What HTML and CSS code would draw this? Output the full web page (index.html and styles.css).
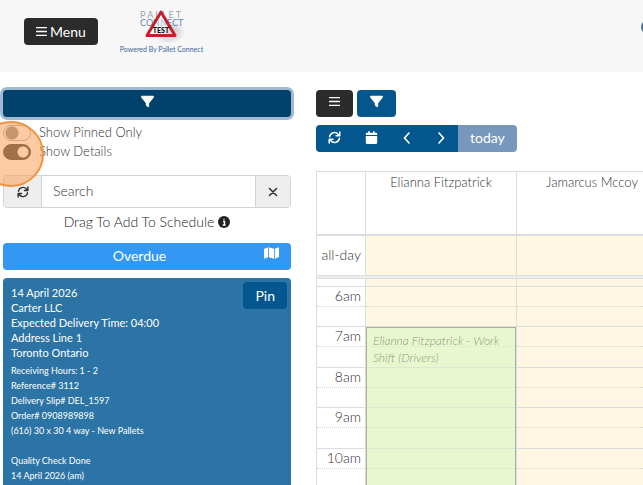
FILE: index.html
```html
<!DOCTYPE html>
<html lang="en">
<head>
    <meta charset="UTF-8">
    <meta name="viewport" content="width=device-width, initial-scale=1.0">
    <title>Pallet Connect - Schedule</title>
    <link rel="stylesheet" href="styles.css">
</head>
<body>
    <!-- Shared icons -->
    <svg class="sprite" aria-hidden="true">
        <symbol id="bars" viewBox="0 0 12 12">
            <path d="M.5 1.7h11M.5 6h11M.5 10.3h11" stroke="currentColor" stroke-width="1.4" stroke-linecap="round"/>
        </symbol>
        <symbol id="filter" viewBox="0 0 512 512">
            <path fill="currentColor" d="M4 55C9 41 24 32 40 32h432c16 0 31 9 36 23s5 31-5 44L320 321v127c0 12-7 23-18 29s-24 4-34-3l-64-48c-8-6-12-16-12-26v-79L9 99C-1 86-3 70 4 55z"/>
        </symbol>
        <symbol id="refresh" viewBox="0 0 16 16">
            <path d="M2 7a6 6 0 0 1 10.500-3L14.200 5.600M14.500 1.300v4.600H9.900M14 9a6 6 0 0 1-10.500 3L1.800 10.400M1.500 14.700v-4.600h4.600" fill="none" stroke="currentColor" stroke-width="1.900" stroke-linecap="round" stroke-linejoin="round"/>
        </symbol>
        <symbol id="calendar" viewBox="0 0 448 512">
            <path fill="currentColor" d="M96 32v32H48C22 64 0 86 0 112v48h448v-48c0-26-22-48-48-48h-48V32a32 32 0 0 0-64 0v32H160V32a32 32 0 0 0-64 0zM448 192H0v272c0 26 22 48 48 48h352c26 0 48-22 48-48V192z"/>
        </symbol>
        <symbol id="map" viewBox="0 0 576 512">
            <path fill="currentColor" d="M384 476L192 421V36l192 55v385zm32-1V88l119-47c20-8 41 6 41 27v334c0 10-6 19-15 22l-145 51zM15 88l145-51v387L41 471C21 479 0 465 0 444V110c0-10 6-19 15-22z"/>
        </symbol>
    </svg>

    <header class="header">
        <button class="btn btn-dark btn-menu"><svg class="icon icon-sm"><use href="#bars"/></svg> Menu</button>
        <a class="brand" href="#">
            <svg class="logo" viewBox="0 0 48 34" role="img" aria-label="Pallet Connect Test">
                <defs>
                    <radialGradient id="shade">
                        <stop offset="0" stop-color="#999" stop-opacity=".7"/>
                        <stop offset="1" stop-color="#999" stop-opacity="0"/>
                    </radialGradient>
                </defs>
                <ellipse cx="32" cy="24" rx="16" ry="12" fill="url(#shade)"/>
                <text class="logo-top" x="3" y="10">P A L L E T</text>
                <text class="logo-bottom" x="3" y="18">CONNECT</text>
                <path d="M24 4L38 27.500H10z" fill="#fff" fill-opacity=".5" stroke="#c4202b" stroke-width="3" stroke-linejoin="round"/>
                <text class="logo-test" x="24" y="25">TEST</text>
            </svg>
            <span class="brand-text">Powered By Pallet Connect</span>
        </a>
        <a class="account" href="#" aria-label="Account"></a>
    </header>

    <main class="content">
        <section class="sidebar">
            <button class="btn btn-icon btn-filter" aria-label="Filter"><svg class="icon icon-lg"><use href="#filter"/></svg></button>

            <div class="switches">
                <label class="switch"><input type="checkbox"> Show Pinned Only</label>
                <label class="switch"><input type="checkbox" checked> Show Details</label>
                <span class="click-marker"></span>
            </div>

            <div class="search">
                <button class="search-btn" aria-label="Refresh"><svg class="icon"><use href="#refresh"/></svg></button>
                <input class="search-input" type="text" placeholder="Search" aria-label="Search">
                <button class="search-btn" aria-label="Clear"><svg class="icon" viewBox="0 0 12 12"><path d="M2.500 2.500l7 7M9.500 2.500l-7 7" stroke="currentColor" stroke-width="1.600" stroke-linecap="round"/></svg></button>
            </div>

            <p class="hint">Drag To Add To Schedule
                <svg class="icon" viewBox="0 0 12 12"><circle cx="6" cy="6" r="6" fill="#222"/><path d="M5 5.500h1.500V9M4.700 9h2.900M6 2.800v1" fill="none" stroke="#fff" stroke-width="1.400"/></svg>
            </p>

            <div class="group-title">
                <span class="group-name">Overdue</span>
                <svg class="icon icon-map"><use href="#map"/></svg>
            </div>

            <article class="card">
                <button class="btn btn-pin">Pin</button>
                <div class="card-main">
                    <div>14 April 2026</div>
                    <div>Carter LLC</div>
                    <div>Expected Delivery Time: 04:00</div>
                    <div>Address Line 1</div>
                    <div>Toronto Ontario</div>
                </div>
                <div class="card-details">
                    <div>Receiving Hours: 1 - 2</div>
                    <div>Reference# 3112</div>
                    <div>Delivery Slip# DEL_1597</div>
                    <div>Order# 0908989898</div>
                    <div>(616) 30 x 30 4 way - New Pallets</div>
                    <br>
                    <div>Quality Check Done</div>
                    <div>14 April 2026 (am)</div>
                </div>
            </article>
        </section>

        <section class="schedule">
            <div class="toolbar">
                <button class="btn btn-icon btn-dark" aria-label="List"><svg class="icon icon-sm"><use href="#bars"/></svg></button>
                <button class="btn btn-icon" aria-label="Filter"><svg class="icon icon-lg"><use href="#filter"/></svg></button>
            </div>
            <div class="btn-group">
                <button class="btn" aria-label="Refresh"><svg class="icon icon-lg"><use href="#refresh"/></svg></button>
                <button class="btn" aria-label="Pick date"><svg class="icon icon-lg"><use href="#calendar"/></svg></button>
                <button class="btn" aria-label="Previous"><svg class="icon icon-arrow" viewBox="0 0 10 12"><path d="M7 1L2.500 6 7 11" fill="none" stroke="currentColor" stroke-width="1.600" stroke-linecap="round"/></svg></button>
                <button class="btn" aria-label="Next"><svg class="icon icon-arrow" viewBox="0 0 10 12"><path d="M3 1l4.500 5L3 11" fill="none" stroke="currentColor" stroke-width="1.600" stroke-linecap="round"/></svg></button>
                <button class="btn btn-today" disabled>today</button>
            </div>

            <table class="calendar">
                <colgroup><col class="col-time"><col class="col-day"><col class="col-day"></colgroup>
                <thead>
                    <tr><th></th><th>Elianna Fitzpatrick</th><th>Jamarcus Mccoy</th></tr>
                </thead>
                <tbody>
                    <tr class="all-day"><th>all-day</th><td></td><td></td></tr>
                    <tr class="divider"><td colspan="3"></td></tr>
                    <tr class="cut"><th></th><td></td><td></td></tr>
                </tbody>
                <tbody class="slots">
                    <tr><th>6am</th><td></td><td></td></tr>
                    <tr><th></th><td></td><td></td></tr>
                    <tr><th>7am</th><td class="has-event"><div class="event">Elianna Fitzpatrick - Work Shift (Drivers)</div></td><td></td></tr>
                    <tr><th></th><td></td><td></td></tr>
                    <tr><th>8am</th><td></td><td></td></tr>
                    <tr><th></th><td></td><td></td></tr>
                    <tr><th>9am</th><td></td><td></td></tr>
                    <tr><th></th><td></td><td></td></tr>
                    <tr><th>10am</th><td></td><td></td></tr>
                    <tr><th></th><td></td><td></td></tr>
                </tbody>
            </table>
        </section>
    </main>
</body>
</html>
```

FILE: styles.css
```css
* {
    box-sizing: border-box;
}

body {
    margin: 0;
    height: 100vh;
    display: flex;
    flex-direction: column;
    overflow: hidden;
    background-color: #fff;
    color: #222;
    font-family: Lato, "Liberation Sans", sans-serif;
    font-size: 14px;
    font-weight: 300;
    line-height: 20px;
}

button,
input {
    font: inherit;
    margin: 0;
}

.sprite {
    display: none;
}

.icon {
    width: 12px;
    height: 12px;
    flex: none;
}

.icon-sm {
    width: 11px;
    height: 11px;
}

.icon-lg {
    width: 13px;
    height: 13px;
}

.icon-arrow {
    width: 10px;
}

/* Header */
.header {
    display: flex;
    align-items: flex-start;
    flex: none;
    height: 72px;
    padding: 8px 0 0 24px;
    background-color: #f7f7f7;
    overflow: hidden;
}

.brand {
    display: flex;
    flex-direction: column;
    align-items: center;
    margin-left: 22px;
    text-decoration: none;
    color: #3f639c;
}

.logo {
    width: 48px;
    height: 34px;
    overflow: visible;
}

.logo-top {
    font-size: 9px;
    font-weight: 400;
    fill: #9aa2ae;
}

.logo-bottom {
    font-size: 9px;
    font-weight: 400;
    fill: #5f86b5;
}

.logo-test {
    font-size: 7px;
    font-weight: 900;
    text-anchor: middle;
    fill: #111;
}

.brand-text {
    font-size: 7px;
    font-weight: 400;
    line-height: 14px;
}

.account {
    width: 14px;
    height: 14px;
    margin: 12px -12px 0 auto;
    border: 2px solid #4a6a9c;
    border-radius: 50%;
}

/* Buttons */
.btn {
    display: flex;
    align-items: center;
    justify-content: center;
    gap: 3px;
    height: 27px;
    padding: 0 12px;
    border: none;
    border-radius: 4px;
    background-color: #04568f;
    color: #fff;
    font-weight: 400;
    cursor: pointer;
}

.btn-icon {
    padding: 0 13px 4px;
}

.btn-dark {
    background-color: #2b2b2b;
}

.btn-menu {
    margin-top: 10px;
}

.btn-filter {
    width: 100%;
    background-color: #00426c;
    box-shadow: 0 0 0 3px #9fbad2;
}

/* Layout */
.content {
    display: flex;
    flex: 1;
    min-height: 0;
    gap: 25px;
    padding: 18px 0 0 3px;
}

.sidebar {
    display: flex;
    flex-direction: column;
    flex: 0 0 288px;
    min-height: 0;
}

.schedule {
    flex: 1;
    min-width: 0;
    overflow: hidden;
}

/* Switches */
.switches {
    position: relative;
    padding-top: 6px;
    color: #333;
    font-size: 13px;
}

.switch {
    display: flex;
    align-items: center;
    gap: 8px;
    line-height: 19px;
}

.switch input {
    appearance: none;
    width: 28px;
    height: 16px;
    border: 1px solid #aaa;
    border-radius: 8px;
    background: radial-gradient(circle at 8px 7px, #888 6px, transparent 7px);
}

.switch input:checked {
    border-color: #333;
    background: radial-gradient(circle at 19px 7px, #fff 5px, #333 6px);
}

.click-marker {
    position: absolute;
    top: 4px;
    left: -25px;
    width: 66px;
    height: 66px;
    border: 2px solid #f0933f;
    border-radius: 50%;
    background-color: rgba(250, 160, 90, 0.55);
}

/* Search */
.search {
    display: flex;
    flex: none;
    height: 33px;
    margin-top: 14px;
    border: 1px solid #ced4da;
    border-radius: 4px;
    overflow: hidden;
}

.search-btn {
    display: flex;
    align-items: center;
    justify-content: center;
    width: 37px;
    padding: 0;
    border: none;
    background-color: #eee;
    color: #333;
}

.search-btn:last-child {
    width: 34px;
}

.search-input {
    flex: 1;
    min-width: 0;
    padding: 0 11px 2px;
    border: 1px solid #ced4da;
    border-width: 0 1px;
}

.search-input::placeholder {
    color: #333;
}

.hint {
    display: flex;
    align-items: center;
    justify-content: center;
    gap: 4px;
    margin: 4px 0 11px;
}

/* Deliveries */
.group-title {
    display: flex;
    flex: none;
    height: 27px;
    padding: 0 12px;
    border-radius: 4px;
    background-color: #3398f3;
    color: #fff;
    font-weight: 400;
}

.group-name {
    flex: 1;
    line-height: 25px;
    text-align: center;
}

.icon-map {
    width: 15px;
    height: 20px;
}

.card {
    flex: 1;
    min-height: 0;
    margin-top: 8px;
    padding: 7px 4px 0 8px;
    border-radius: 4px 4px 0 0;
    background-color: #2c74a6;
    color: #fff;
    font-weight: 400;
    overflow: hidden;
}

.btn-pin {
    float: right;
    margin-top: -3px;
}

.card-main {
    font-size: 11px;
    line-height: 15px;
}

.card-details {
    margin-top: 3px;
    font-size: 9px;
    line-height: 15px;
}

/* Toolbar */
.toolbar {
    display: flex;
    gap: 4px;
}

.btn-group {
    display: inline-flex;
    margin: 8px 0 19px;
    border-radius: 4px;
    overflow: hidden;
    vertical-align: top;
}

.btn-group .btn {
    padding: 0 12px 2px;
    border-radius: 0;
}

.btn-group .btn-today {
    background-color: #7798bc;
}

/* Calendar */
.calendar {
    width: 352px;
    table-layout: fixed;
    border-collapse: collapse;
    color: #333;
}

.col-time {
    width: 49px;
}

.calendar th,
.calendar td {
    padding: 0;
    border: 1px solid #dcdde2;
    font-weight: inherit;
    vertical-align: top;
}

.calendar thead th {
    height: 63px;
    border-bottom-width: 2px;
    font-size: 13px;
}

.calendar tbody th {
    padding-right: 4px;
    text-align: right;
}

.calendar tbody td {
    background-color: #fff7e1;
}

.calendar .all-day th,
.calendar .all-day td {
    height: 41px;
    vertical-align: middle;
}

.calendar .divider td {
    height: 3px;
    background-color: #eee;
}

.calendar .cut td {
    height: 8px;
}

.calendar .slots th,
.calendar .slots td {
    height: 20px;
    line-height: 18px;
}

.calendar .slots tr:nth-child(4n) td {
    height: 21px;
}

.calendar .slots tr:nth-child(odd) > * {
    border-bottom: 1px dotted #d5d5d5;
}

.calendar .slots tr:nth-child(even) > * {
    border-top: 1px dotted #d5d5d5;
}

.calendar .has-event {
    position: relative;
}

/* Lets the slot lines show through */
.event {
    position: absolute;
    top: 0;
    left: 0;
    right: 0;
    height: 200px;
    padding: 4px 6px;
    border: 1px solid #a9b29c;
    background-color: rgba(210, 247, 190, 0.5);
    color: #909880;
    font-size: 12px;
    font-style: italic;
    line-height: 17px;
}
```
